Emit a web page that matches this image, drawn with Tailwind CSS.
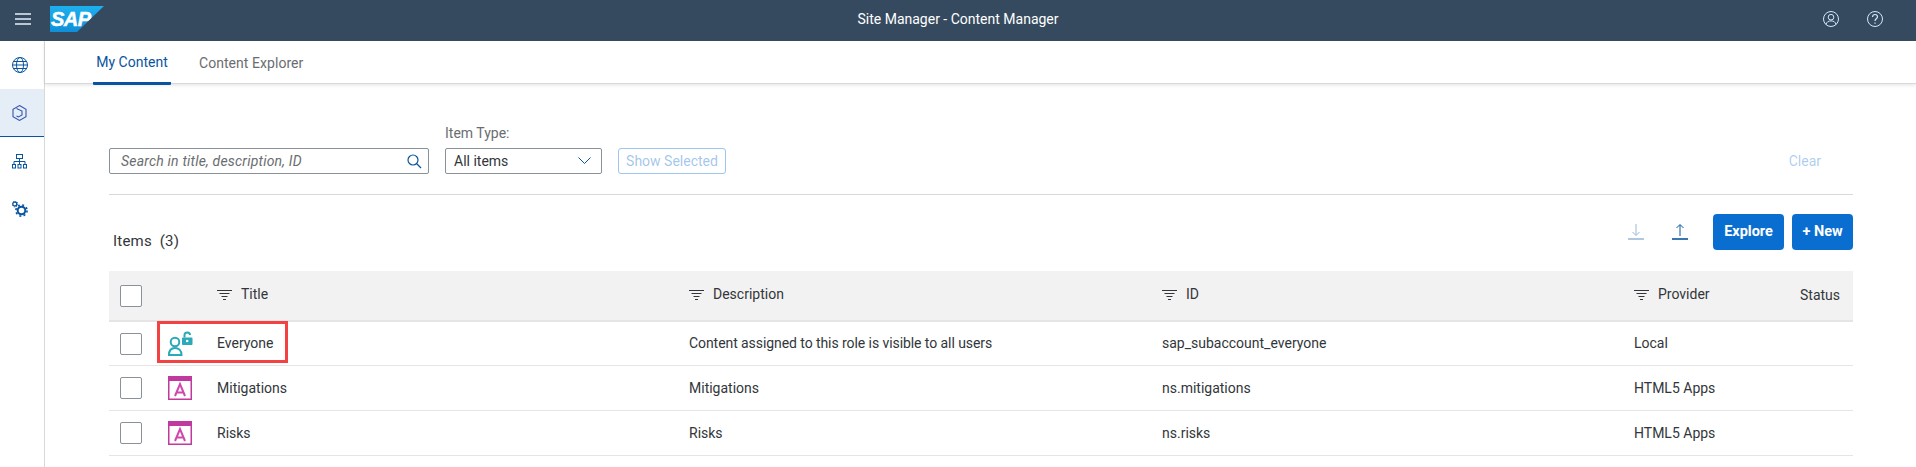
<!DOCTYPE html>
<html lang="en">
<head>
<meta charset="UTF-8">
<title>Site Manager - Content Manager</title>
<script src="https://cdn.jsdelivr.net/npm/@tailwindcss/browser@4"></script>
</head>
<body class="bg-white h-[467px] overflow-hidden font-['Roboto',sans-serif] text-[14px] text-[#32363a]">
  <!-- shell bar -->
  <header class="h-[41px] bg-[#354a5f] flex items-center relative pb-[3px]">
    <svg class="ml-[15px] w-[16px] h-[12px]" viewBox="0 0 16 12" fill="none" stroke="#e5f0fa" stroke-width="1.6"><path d="M0 1h16M0 6h16M0 11h16"/></svg>
    <div class="ml-[19px] w-[54px] h-[26px] bg-gradient-to-b from-[#1eb0ee] to-[#0f8fd8] [clip-path:polygon(0_0,100%_0,50%_100%,0_100%)] pl-[1px] text-white font-['Liberation_Sans',sans-serif] font-bold italic text-[20px] leading-[26px] tracking-[-0.5px] [-webkit-text-stroke:0.5px_white]">SAP</div>
    <div class="absolute inset-x-0 top-0 h-[38px] flex items-center justify-center text-white">Site Manager - Content Manager</div>
    <div class="ml-auto flex items-center gap-[28px] pr-[33px] relative">
      <svg class="w-[16px] h-[16px]" viewBox="0 0 16 16" fill="none" stroke="#d1e8ff" stroke-width="1"><circle cx="8" cy="8" r="7.5"/><circle cx="8" cy="6.2" r="2.8"/><path d="M3 13.5c.6-2.6 2.400-3.600 5-3.600s4.400 1 5 3.600"/></svg>
      <svg class="w-[16px] h-[16px]" viewBox="0 0 16 16" fill="none" stroke="#d1e8ff" stroke-width="1"><circle cx="8" cy="8" r="7.500"/><path d="M5.500 6c0-1.500 1.100-2.500 2.500-2.500s2.500 1 2.500 2.300c0 1.900-2.500 2-2.500 4.200M8 11.500v1.300" stroke-width="1.200"/></svg>
    </div>
  </header>

  <div class="flex h-[426px]">
    <!-- side nav -->
    <nav class="w-[45px] shrink-0 border-r border-[#d9d9d9] flex flex-col">
      <div class="h-[48px] flex items-center justify-center pr-[5px]">
        <svg class="w-[16px] h-[16px]" viewBox="0 0 16 16" fill="none" stroke="#0854a0" stroke-width="1"><circle cx="8" cy="8" r="7.500"/><ellipse cx="8" cy="8" rx="3.500" ry="7.500"/><path d="M.5 8h15M1.500 4.500h13M1.500 11.500h13"/></svg>
      </div>
      <div class="h-[48px] bg-[#e5edf7] border-b-[1px] border-[#0854a0] flex items-center justify-center pr-[5px]">
        <svg class="w-[15px] h-[16px]" viewBox="0 0 15 16" fill="none" stroke="#3555b0" stroke-width="1.100"><path d="M7.500.6l6.500 3.700v7.400l-6.500 3.700L1 11.700V4.300z"/><path d="M4.500 3.500l5.500 2.500v4l-3.500 2-2-1"/></svg>
      </div>
      <div class="h-[48px] flex items-center justify-center pr-[5px]">
        <svg class="w-[15px] h-[15px]" viewBox="0 0 15 15" fill="none" stroke="#0854a0" stroke-width="1"><rect x="4.500" y=".5" width="6" height="4"/><path d="M7.500 4.500v3M2 10.500V7.500h11v3M7.500 7.500v3"/><rect x=".5" y="10.500" width="3" height="3.500"/><rect x="6" y="10.500" width="3" height="3.500"/><rect x="11.500" y="10.500" width="3" height="3.500"/></svg>
      </div>
      <div class="h-[48px] flex items-center justify-center pr-[5px]">
        <svg class="w-[16px] h-[16px]" viewBox="0 0 16 16" fill="none" stroke="#0854a0"><circle cx="2.800" cy="3" r="2" stroke-width="1.300"/><circle cx="2.800" cy="3" r="3" stroke-width="1" stroke-dasharray="1 1.350"/><circle cx="9.500" cy="9.500" r="3.800" stroke-width="2"/><circle cx="9.500" cy="9.500" r="5.600" stroke-width="1.600" stroke-dasharray="2 2.400"/></svg>
      </div>
    </nav>

    <main class="flex-1 min-w-0">
      <!-- tabs -->
      <div class="h-[43px] border-b border-[#d9d9d9] shadow-[0_1px_4px_rgba(0,0,0,0.12)] flex pl-[48px] gap-[28px]">
        <div class="h-[44px] w-[78px] border-b-[3px] border-[#0854a0] rounded-b-[1px] flex items-center justify-center pt-[2px] text-[#0854a0]">My Content</div>
        <div class="h-[43px] flex items-center pt-[2px] text-[#6a6d70] tracking-[0.05px]">Content Explorer</div>
      </div>

      <div class="pl-[64px] pr-[63px]">
        <!-- filters -->
        <div class="h-[111px] border-b border-[#d9d9d9] flex items-start pt-[43px]">
          <div class="mt-[21px] w-[320px] h-[26px] border border-[#89919a] rounded-[2px] flex items-center pl-[11px] pr-[6px] italic text-[#6a6d70]">
            <span class="tracking-[0.2px]">Search in title, description, ID</span>
            <svg class="ml-auto w-[15px] h-[15px]" viewBox="0 0 15 15" fill="none" stroke="#0854a0" stroke-width="1.200"><circle cx="6" cy="6" r="5"/><path d="M9.500 9.500L14 14"/></svg>
          </div>
          <div class="ml-[16px] w-[157px]">
            <div class="h-[21px] text-[#6a6d70] leading-[13px]">Item Type:</div>
            <div class="h-[26px] border border-[#89919a] rounded-[2px] flex items-center pl-[8px] pr-[10px]">
              <span>All items</span>
              <svg class="ml-auto w-[13px] h-[8px]" viewBox="0 0 13 8" fill="none" stroke="#0854a0"><path d="M.5.500l6 6 6-6"/></svg>
            </div>
          </div>
          <div class="ml-[16px] mt-[21px] w-[108px] h-[26px] border border-[#0a6ed1]/40 rounded-[3px] flex items-center justify-center text-[#0a6ed1]/40">Show Selected</div>
          <div class="ml-auto mt-[21px] mr-[32px] h-[26px] flex items-center text-[#0a6ed1]/35">Clear</div>
        </div>

        <!-- items toolbar -->
        <div class="h-[76px] flex items-center pb-[3px]">
          <span class="ml-[4px] text-[15px] mt-[20px] tracking-[0.2px]">Items&nbsp; (3)</span>
          <div class="ml-auto flex items-center">
            <svg class="w-[16px] h-[16px]" viewBox="0 0 16 16" fill="none" stroke="#0854a0" opacity=".4"><path d="M8 0v11M4.500 8L8 11.500 11.500 8"/><path d="M0 15h16" stroke-width="1.600"/></svg>
            <svg class="ml-[28px] w-[16px] h-[16px]" viewBox="0 0 16 16" fill="none" stroke="#0854a0"><path d="M8 12V1M4.500 4L8 .5 11.500 4"/><path d="M0 15h16" stroke-width="1.600"/></svg>
            <div class="ml-[25px] w-[71px] h-[36px] bg-[#0a6ed1] rounded-[4px] flex items-center justify-center text-white font-bold text-[14.5px]">Explore</div>
            <div class="ml-[8px] w-[61px] h-[36px] bg-[#0a6ed1] rounded-[4px] flex items-center justify-center text-white font-bold text-[14.5px]">+ New</div>
          </div>
        </div>

        <!-- table -->
        <div class="h-[51px] bg-[#f2f2f2] border-b-2 border-[#e5e5e5] grid grid-cols-[108px_472px_473px_472px_166px_53px] items-center">
          <div class="pl-[11px] flex"><div class="w-[22px] h-[22px] bg-white border border-[#89919a] rounded-[2px]"></div></div>
          <div class="flex items-center gap-[9px] pb-[2px]"><svg class="w-[15px] h-[10px]" viewBox="0 0 15 10" stroke="#32363a"><path d="M0 .5h15M2.500 3.500h10M4.500 6.500h6M6 9.500h3"/></svg>Title</div>
          <div class="flex items-center gap-[9px] pb-[2px]"><svg class="w-[15px] h-[10px]" viewBox="0 0 15 10" stroke="#32363a"><path d="M0 .5h15M2.500 3.500h10M4.500 6.500h6M6 9.500h3"/></svg>Description</div>
          <div class="flex items-center gap-[9px] pb-[2px]"><svg class="w-[15px] h-[10px]" viewBox="0 0 15 10" stroke="#32363a"><path d="M0 .5h15M2.500 3.500h10M4.500 6.500h6M6 9.500h3"/></svg>ID</div>
          <div class="flex items-center gap-[9px] pb-[2px]"><svg class="w-[15px] h-[10px]" viewBox="0 0 15 10" stroke="#32363a"><path d="M0 .5h15M2.500 3.500h10M4.500 6.500h6M6 9.500h3"/></svg>Provider</div>
          <div>Status</div>
        </div>

        <div class="relative h-[44px] border-b border-[#e5e5e5] grid grid-cols-[108px_472px_473px_472px_166px_53px] items-center">
          <div class="flex items-center pl-[11px]">
            <div class="w-[22px] h-[22px] border border-[#89919a] rounded-[2px]"></div>
            <svg class="ml-[26px] w-[25px] h-[25px]" viewBox="0 0 25 25" fill="none" stroke="#2aa9b8" stroke-width="2"><circle cx="7" cy="11" r="4.300"/><path d="M1 24c0-4.500 2.500-7 6-7s6.500 2.500 6.500 7z"/><rect x="14" y="6.500" width="10.500" height="7.500" rx="1" fill="#2aa9b8" stroke="none"/><path d="M16.500 6.500V4c0-3.500 5.500-3.500 5.500 0"/><circle cx="19.200" cy="10" r="1.300" fill="#fff" stroke="none"/></svg>
          </div>
          <div>Everyone</div>
          <div class="tracking-[-0.07px]">Content assigned to this role is visible to all users</div>
          <div>sap_subaccount_everyone</div>
          <div>Local</div>
          <div></div>
          <div class="absolute left-[48px] top-[-1px] w-[131px] h-[42px] border-[3px] border-[#f44141]"></div>
        </div>

        <div class="h-[45px] border-b border-[#e5e5e5] grid grid-cols-[108px_472px_473px_472px_166px_53px] items-center">
          <div class="flex items-center pl-[11px]">
            <div class="w-[22px] h-[22px] border border-[#89919a] rounded-[2px]"></div>
            <svg class="ml-[26px] w-[24px] h-[24px]" viewBox="0 0 24 24" fill="none"><rect x=".75" y=".75" width="22.500" height="22.500" stroke="#c0399f" stroke-width="1.500"/><rect width="24" height="5" fill="#c0399f"/><path d="M7 20l5-12 5 12M8.500 16.500h7" stroke="#d048ae" stroke-width="2"/></svg>
          </div>
          <div>Mitigations</div>
          <div>Mitigations</div>
          <div>ns.mitigations</div>
          <div>HTML5 Apps</div>
          <div></div>
        </div>

        <div class="h-[45px] border-b border-[#e5e5e5] grid grid-cols-[108px_472px_473px_472px_166px_53px] items-center">
          <div class="flex items-center pl-[11px]">
            <div class="w-[22px] h-[22px] border border-[#89919a] rounded-[2px]"></div>
            <svg class="ml-[26px] w-[24px] h-[24px]" viewBox="0 0 24 24" fill="none"><rect x=".75" y=".75" width="22.500" height="22.500" stroke="#c0399f" stroke-width="1.500"/><rect width="24" height="5" fill="#c0399f"/><path d="M7 20l5-12 5 12M8.500 16.500h7" stroke="#d048ae" stroke-width="2"/></svg>
          </div>
          <div>Risks</div>
          <div>Risks</div>
          <div>ns.risks</div>
          <div>HTML5 Apps</div>
          <div></div>
        </div>
      </div>
    </main>
  </div>
</body>
</html>
